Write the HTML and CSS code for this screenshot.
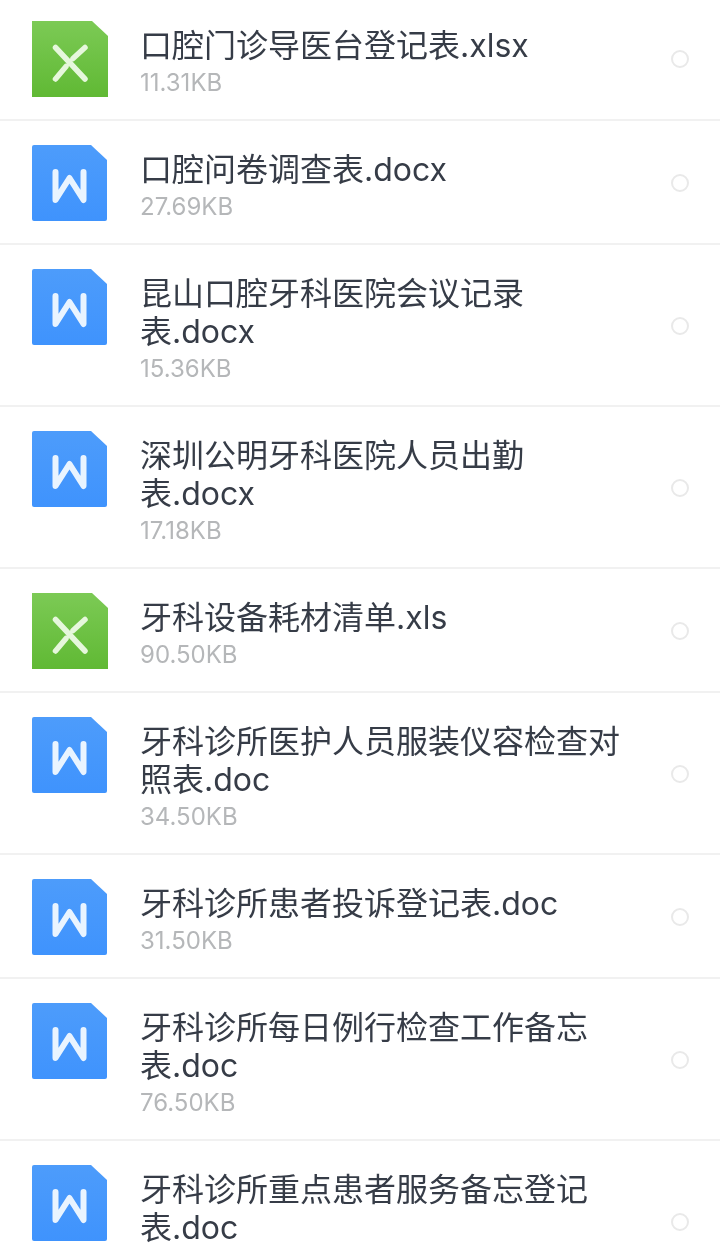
FILE: index.html
```html
<!DOCTYPE html>
<html lang="zh-CN">
<head>
<meta charset="utf-8">
<title>文件列表</title>
<link rel="stylesheet" href="styles.css">
</head>
<body>
<svg class="defs" width="0" height="0" aria-hidden="true">
  <defs>
    <linearGradient id="gx" x1="0" y1="0" x2="0" y2="1"><stop offset="0" stop-color="#7cca55"/><stop offset="1" stop-color="#60b934"/></linearGradient>
    <linearGradient id="gw" x1="0" y1="0" x2="0" y2="1"><stop offset="0" stop-color="#4d9cfb"/><stop offset="1" stop-color="#3f93fd"/></linearGradient>
    <symbol id="xls" viewBox="0 0 76 76">
      <path d="M0 0H60L76 15V76H0Z" fill="url(#gx)"/>
      <path d="M23.500 26.500L53 58M53 26.500L41 37.500M34 45.500L23.500 58" fill="none" stroke="#e6f7dc" stroke-width="5.500" stroke-linecap="round"/>
    </symbol>
    <symbol id="doc" viewBox="0 0 76 76">
      <path d="M0 2Q0 0 2 0H59L75 15V74Q75 76 73 76H2Q0 76 0 74Z" fill="url(#gw)"/>
      <path d="M23.500 27V55L37.500 33L51.500 55V27" fill="none" stroke="#e9f4ff" stroke-width="6" stroke-linecap="round" stroke-linejoin="round"/>
    </symbol>
  </defs>
</svg>
<main class="list">
  <div class="row"><svg class="icon"><use href="#xls"/></svg><div class="info"><div class="name">口腔门诊导医台登记表.xlsx</div><div class="size">11.31KB</div></div><span class="radio"></span></div>
  <div class="row"><svg class="icon"><use href="#doc"/></svg><div class="info"><div class="name">口腔问卷调查表.docx</div><div class="size">27.69KB</div></div><span class="radio"></span></div>
  <div class="row"><svg class="icon"><use href="#doc"/></svg><div class="info"><div class="name">昆山口腔牙科医院会议记录表.docx</div><div class="size">15.36KB</div></div><span class="radio"></span></div>
  <div class="row"><svg class="icon"><use href="#doc"/></svg><div class="info"><div class="name">深圳公明牙科医院人员出勤表.docx</div><div class="size">17.18KB</div></div><span class="radio"></span></div>
  <div class="row"><svg class="icon"><use href="#xls"/></svg><div class="info"><div class="name">牙科设备耗材清单.xls</div><div class="size">90.50KB</div></div><span class="radio"></span></div>
  <div class="row"><svg class="icon"><use href="#doc"/></svg><div class="info"><div class="name">牙科诊所医护人员服装仪容检查对照表.doc</div><div class="size">34.50KB</div></div><span class="radio"></span></div>
  <div class="row"><svg class="icon"><use href="#doc"/></svg><div class="info"><div class="name">牙科诊所患者投诉登记表.doc</div><div class="size">31.50KB</div></div><span class="radio"></span></div>
  <div class="row"><svg class="icon"><use href="#doc"/></svg><div class="info"><div class="name">牙科诊所每日例行检查工作备忘表.doc</div><div class="size">76.50KB</div></div><span class="radio"></span></div>
  <div class="row"><svg class="icon"><use href="#doc"/></svg><div class="info"><div class="name">牙科诊所重点患者服务备忘登记表.doc</div><div class="size">&nbsp;</div></div><span class="radio"></span></div>
</main>
</body>
</html>
```
FILE: styles.css
```css
html, body {
  margin: 0;
  height: 1245px;
  overflow: hidden;
  background: #fff;
}
.defs { position: absolute; }
.list {
  margin-top: -3px;
  font-family: Inter, "Noto Sans CJK SC", sans-serif;
  filter: blur(0.5px);
}
.row {
  display: flex;
  align-items: center;
  padding: 24px 31px 19px 32px;
  border-bottom: 2px solid #f1f1f1;
}
.icon {
  align-self: flex-start;
  width: 76px;
  height: 76px;
  flex: none;
}
.info {
  align-self: flex-start;
  margin: 6px 0 0 32px;
  width: 484px;
}
.name {
  font-size: 32px;
  line-height: 38px;
  color: #363c47;
}
.size {
  margin-top: 1px;
  font-size: 24px;
  line-height: 34px;
  color: #b5b7b9;
}
.radio {
  margin: 0 0 4px auto;
  width: 18px;
  height: 18px;
  box-sizing: border-box;
  border: 2px solid #e9e9e9;
  border-radius: 50%;
}
```
